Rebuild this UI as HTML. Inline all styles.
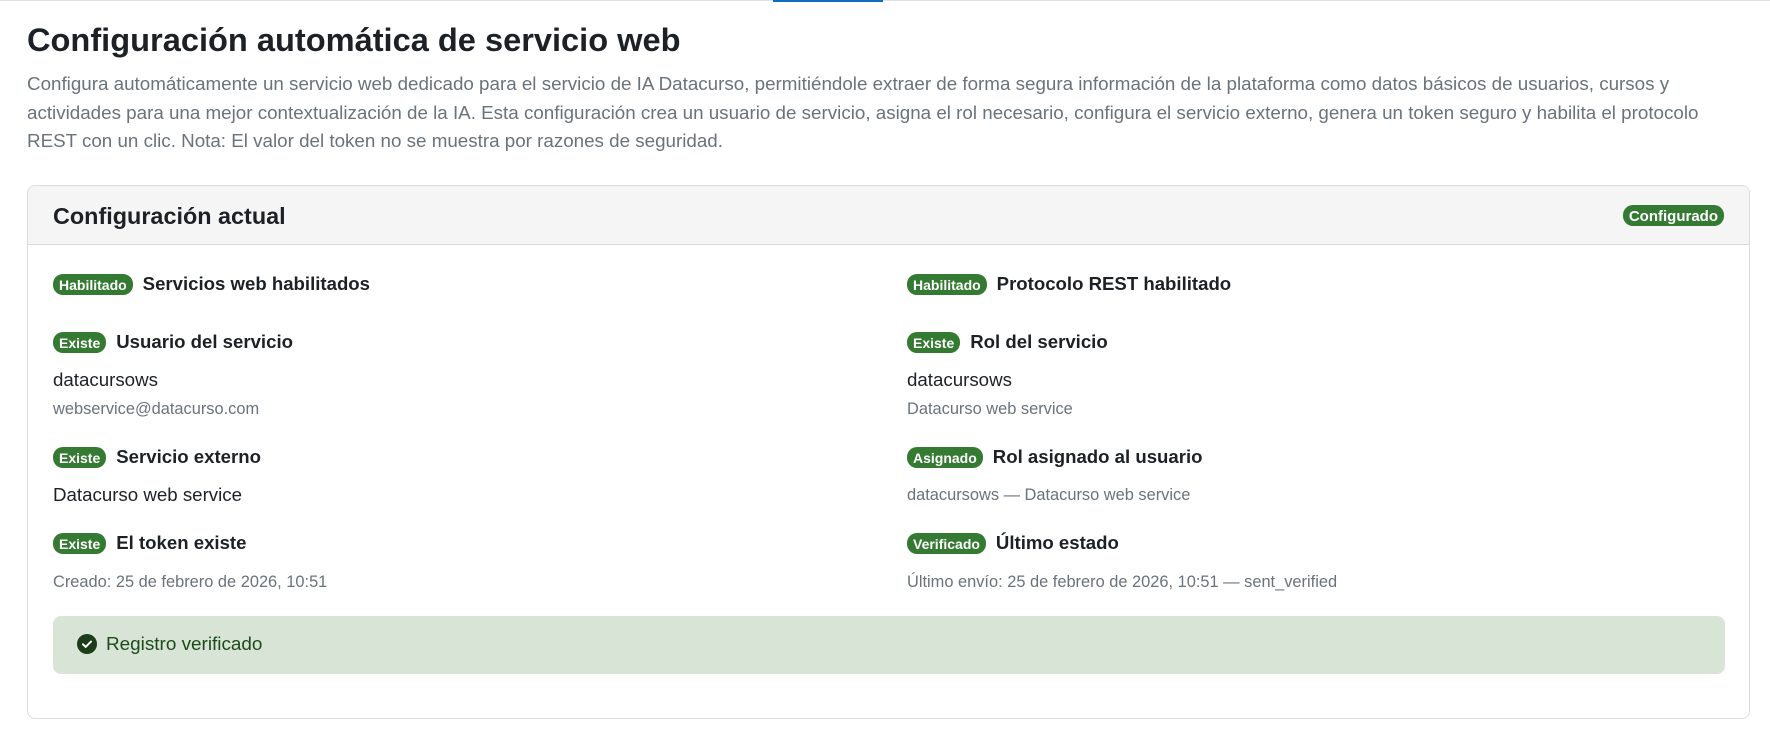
<!DOCTYPE html>
<html><head><meta charset="utf-8"><style>
*{box-sizing:border-box;margin:0;padding:0}
body{width:1770px;height:736px;background:#fff;font-family:"Liberation Sans",sans-serif;color:#1d2125;position:relative;overflow:hidden}
.topline{position:absolute;left:0;top:0;width:1770px;height:1px;background:#dee2e6}
.topblue{position:absolute;left:773px;top:0;width:110px;height:2px;background:#0f6cbf}
h1{position:absolute;left:27px;top:20px;font-size:32.6px;font-weight:bold;line-height:40px}
.desc{position:absolute;left:27px;top:70px;width:1710px;font-size:18.8px;line-height:28.6px;color:#6a737b}
.card{position:absolute;left:27px;top:185px;width:1723px;height:534px;border:1px solid #dcdcdc;border-radius:8px;overflow:hidden}
.hdr{height:59px;background:#f5f5f5;border-bottom:1px solid #dcdcdc;position:relative}
.hdr h2{position:absolute;left:25px;top:15px;font-size:23.4px;font-weight:600;line-height:30px}
.badge{display:inline-flex;align-items:center;background:#357a32;color:#fff;font-weight:bold;font-size:14px;height:21px;padding:1px 6px 0;border-radius:10px;vertical-align:middle}
.hdr .badge{position:absolute;right:25px;top:19px;font-size:15px;height:21px;padding:1px 6px 0}
.it{position:absolute;font-size:18.6px;font-weight:bold;line-height:24px;white-space:nowrap;display:flex;align-items:center}
.it .badge{margin-right:10px}
.v{position:absolute;font-size:18.7px;line-height:24px;white-space:nowrap}
.s{position:absolute;font-size:16.4px;line-height:22px;color:#6a737b;white-space:nowrap}
.alert{position:absolute;left:25px;top:430px;width:1672px;height:58px;background:#d8e5d6;border-radius:8px;color:#1c4a1a;font-size:18.9px;line-height:58px;padding-left:53px}
.alert svg{position:absolute;left:24px;top:18px}
</style></head><body>
<div class="topline"></div><div class="topblue"></div>
<h1>Configuración automática de servicio web</h1>
<div class="desc">Configura automáticamente un servicio web dedicado para el servicio de IA Datacurso, permitiéndole extraer de forma segura información de la plataforma como datos básicos de usuarios, cursos y actividades para una mejor contextualización de la IA. Esta configuración crea un usuario de servicio, asigna el rol necesario, configura el servicio externo, genera un token seguro y habilita el protocolo REST con un clic. Nota: El valor del token no se muestra por razones de seguridad.</div>
<div class="card">
<div class="hdr"><h2>Configuración actual</h2><span class="badge">Configurado</span></div>
<div class="it" style="left:25px;top:86px"><span class="badge">Habilitado</span>Servicios web habilitados</div>
<div class="it" style="left:879px;top:86px"><span class="badge">Habilitado</span>Protocolo REST habilitado</div>
<div class="it" style="left:25px;top:144px"><span class="badge">Existe</span>Usuario del servicio</div>
<div class="it" style="left:879px;top:144px"><span class="badge">Existe</span>Rol del servicio</div>
<div class="v" style="left:25px;top:182px">datacursows</div>
<div class="v" style="left:879px;top:182px">datacursows</div>
<div class="s" style="left:25px;top:212px">webservice@datacurso.com</div>
<div class="s" style="left:879px;top:212px">Datacurso web service</div>
<div class="it" style="left:25px;top:259px"><span class="badge">Existe</span>Servicio externo</div>
<div class="it" style="left:879px;top:259px"><span class="badge">Asignado</span>Rol asignado al usuario</div>
<div class="v" style="left:25px;top:297px">Datacurso web service</div>
<div class="s" style="left:879px;top:298px">datacursows — Datacurso web service</div>
<div class="it" style="left:25px;top:345px"><span class="badge">Existe</span>El token existe</div>
<div class="it" style="left:879px;top:345px"><span class="badge">Verificado</span>Último estado</div>
<div class="s" style="left:25px;top:385px">Creado: 25 de febrero de 2026, 10:51</div>
<div class="s" style="left:879px;top:385px">Último envío: 25 de febrero de 2026, 10:51 — sent_verified</div>
<div class="alert"><svg width="20" height="20" viewBox="0 0 20 20"><circle cx="10" cy="10" r="10" fill="#1c3d1a"/><path d="M6 10.3l2.7 2.6L14 7.6" stroke="#fff" stroke-width="2" fill="none" stroke-linecap="round" stroke-linejoin="round"/></svg>Registro verificado</div>
</div>
</body></html>
